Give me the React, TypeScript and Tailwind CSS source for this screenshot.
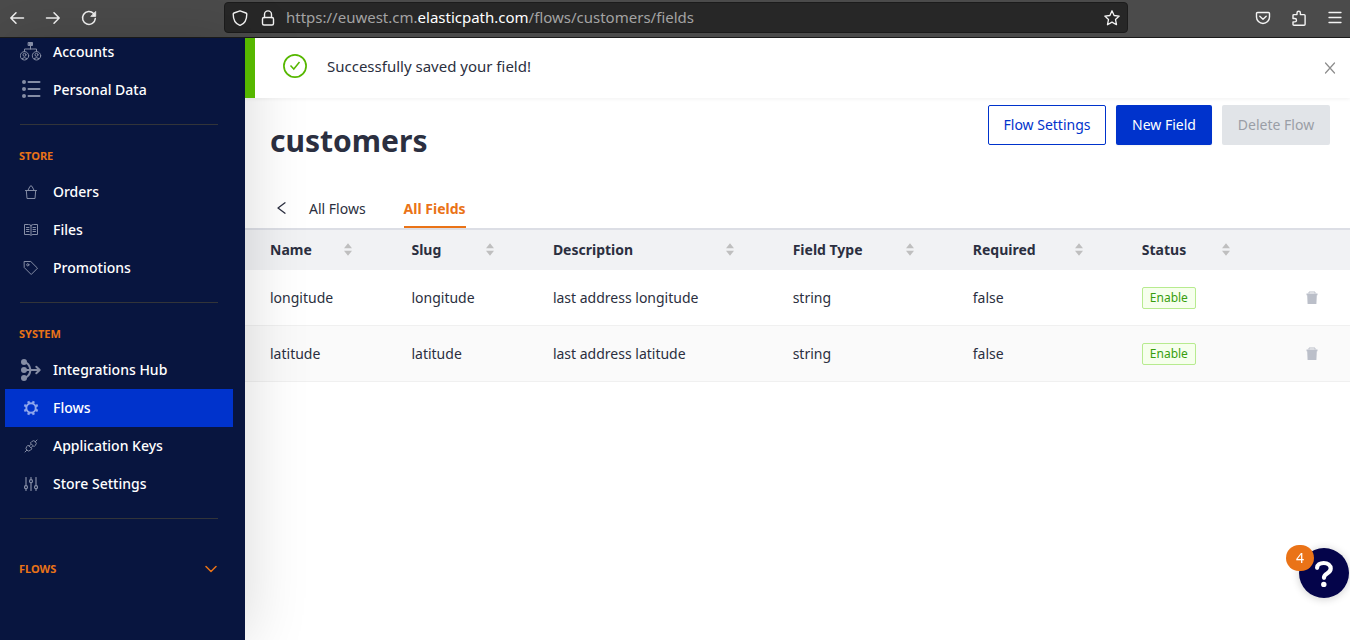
import type { ReactNode } from "react";

const stroke = {
  fill: "none",
  stroke: "currentColor",
  strokeLinecap: "round" as const,
  strokeLinejoin: "round" as const,
};

function BackIcon() {
  return (
    <svg width="16" height="16" viewBox="0 0 16 16" {...stroke} strokeWidth="1.5">
      <path d="M14.5 8H2M7 2.8 1.8 8 7 13.2" />
    </svg>
  );
}

function ForwardIcon() {
  return (
    <svg width="16" height="16" viewBox="0 0 16 16" {...stroke} strokeWidth="1.5">
      <path d="M1.5 8H14M9 2.8 14.2 8 9 13.2" />
    </svg>
  );
}

function ReloadIcon() {
  return (
    <svg width="16" height="16" viewBox="0 0 16 16" {...stroke} strokeWidth="1.5">
      <path d="M12.6 3.6A6.4 6.4 0 1 0 14.3 8.6" />
      <path d="M14.7 1.8v4.6h-4.6z" fill="currentColor" strokeWidth="0.8" />
    </svg>
  );
}

function ShieldIcon() {
  return (
    <svg width="16" height="16" viewBox="0 0 16 16" {...stroke} strokeWidth="1.4">
      <path d="M8 .8 14 3q.8.3.8 1C14.8 9.6 12.4 14 8 15.4 3.6 14 1.2 9.6 1.2 4q0-.7.8-1z" />
    </svg>
  );
}

function LockIcon() {
  return (
    <svg width="16" height="16" viewBox="0 0 16 16" {...stroke} strokeWidth="1.4">
      <path d="M4.5 7.500V4.400a3.500 3.500 0 0 1 7 0v3.100" />
      <rect x="2.500" y="7.500" width="11" height="7.500" rx="1.500" />
    </svg>
  );
}

function StarIcon() {
  return (
    <svg width="16" height="16" viewBox="0 0 16 16" {...stroke} strokeWidth="1.3">
      <path d="m8 .8 2.100 4.700 5.100.6-3.700 3.400 1 5.200L8 12.100l-4.500 2.600 1-5.200L.8 6.100l5.100-.6z" />
    </svg>
  );
}

function PocketIcon() {
  return (
    <svg width="16" height="16" viewBox="0 0 16 16" {...stroke} strokeWidth="1.4">
      <path d="M2.600 2.500h10.800q1.100 0 1.100 1.100V7a6.500 6.500 0 0 1-13 0V3.600q0-1.100 1.100-1.100z" />
      <path d="m4.800 6.200 3.200 3 3.200-3" />
    </svg>
  );
}

function PuzzleIcon() {
  return (
    <svg width="16" height="16" viewBox="0 0 16 16" {...stroke} strokeWidth="1.4">
      <path d="M6 4.600V2.900a1.700 1.700 0 0 1 3.400 0v1.700h3.700q1 0 1 1v8.600q0 1-1 1H3q-1 0-1-1v-2.300h1.800a1.700 1.700 0 0 0 0-3.400H2V5.600q0-1 1-1z" />
    </svg>
  );
}

function MenuIcon() {
  return (
    <svg width="16" height="16" viewBox="0 0 16 16" {...stroke} strokeWidth="1.3">
      <path d="M2 2.500h12M2 7.500h12M2 12.500h12" />
    </svg>
  );
}

function AccountsIcon() {
  return (
    <svg width="22" height="20" viewBox="0 0 22 20" {...stroke} strokeWidth="1">
      <rect x="8.500" y=".5" width="4" height="3" fill="currentColor" />
      <path d="M10.500 4v3M4.500 9.500V7h12v2.500" />
      <circle cx="4.500" cy="13.800" r="4.200" />
      <circle cx="16.500" cy="13.800" r="4.200" />
      <circle cx="4.500" cy="12.800" r="1.500" />
      <circle cx="16.500" cy="12.800" r="1.500" />
      <path d="M2 16.500q2.500-2 5 0M14 16.500q2.500-2 5 0" />
    </svg>
  );
}

function ListIcon() {
  return (
    <svg width="20" height="20" viewBox="0 0 20 20" {...stroke} strokeWidth="2">
      <path d="M7.500 2h11M7.500 9h11M7.500 16h11" />
      <g fill="currentColor" stroke="none">
        <circle cx="3" cy="2" r="2" />
        <circle cx="3" cy="9" r="2" />
        <circle cx="3" cy="16" r="2" />
      </g>
    </svg>
  );
}

function BagIcon() {
  return (
    <svg width="14" height="14" viewBox="0 0 14 14" {...stroke} strokeWidth="1">
      <path d="M1.500 5.500h11M2.300 5.500l.7 8h8l.7-8M4 5.200 6 1.300q1-1 2 0l2 3.900" />
    </svg>
  );
}

function BookIcon() {
  return (
    <svg width="16" height="14" viewBox="0 0 16 14" {...stroke} strokeWidth="1">
      <path d="M8 2.500Q7 1.500 5.500 1.500h-4v10h4.500Q7.500 11.500 8 12.500q.5-1 2-1h4.500v-10h-4Q9 1.500 8 2.500zV12M3.500 4.500h2.500M3.500 6.500h2.500M3.500 8.500h2.500M10 4.500h2.500M10 6.500h2.500M10 8.500h2.500" />
    </svg>
  );
}

function TagIcon() {
  return (
    <svg width="16" height="16" viewBox="0 0 16 16" {...stroke} strokeWidth="1">
      <path d="M1.500 1.500h6.300l6.700 6.700-6.300 6.300-6.700-6.700z" />
      <circle cx="4.800" cy="4.800" r="1.100" />
    </svg>
  );
}

function HubIcon() {
  return (
    <svg width="22" height="24" viewBox="0 0 22 24" {...stroke} strokeWidth="2">
      <path d="M4 4q5.500 1 6.500 8-1 7-6.500 8M4 12h15.500M16.300 8.800l3.400 3.200-3.400 3.200" />
      <g fill="currentColor" stroke="none">
        <circle cx="4" cy="4" r="3" />
        <circle cx="4" cy="12" r="3" />
        <circle cx="4" cy="20" r="3" />
      </g>
    </svg>
  );
}

const gearTeeth = [22.5, 67.5, 112.5, 157.5, 202.5, 247.5, 292.5, 337.5];

function GearIcon() {
  return (
    <svg width="16" height="16" viewBox="0 0 16 16" fill="none" stroke="currentColor">
      <circle cx="8" cy="8" r="4.700" strokeWidth="1.900" />
      {gearTeeth.map((angle) => (
        <path key={angle} d="M8 3V.7" strokeWidth="2.400" transform={`rotate(${angle} 8 8)`} />
      ))}
    </svg>
  );
}

function PlugIcon() {
  return (
    <svg width="14" height="14" viewBox="0 0 14 14" {...stroke} strokeWidth="1">
      <path d="M1 13l1.800-1.800M13 1l-1.800 1.800M2.800 11.200a2.600 2.600 0 0 1 0-3.700L4.200 6.100l3.700 3.700-1.400 1.400a2.600 2.600 0 0 1-3.700 0zM6.600 3.700l1.100-1.100a2.600 2.600 0 0 1 3.700 3.700l-1.100 1.100zM5.300 7l1.600-1.600M7 8.700l1.600-1.600" />
    </svg>
  );
}

function SlidersIcon() {
  return (
    <svg width="14" height="14" viewBox="0 0 14 14" {...stroke} strokeWidth="1.2">
      <path d="M2 .5v8M2 12v1.500M7 .5v2M7 6v7.500M12 .5v8M12 12v1.500" />
      <circle cx="2" cy="10.200" r="1.500" />
      <circle cx="7" cy="4.200" r="1.500" />
      <circle cx="12" cy="10.200" r="1.500" />
    </svg>
  );
}

function SuccessIcon() {
  return (
    <svg width="24" height="24" viewBox="0 0 24 24" fill="none" stroke="currentColor">
      <circle cx="12" cy="12" r="11.1" strokeWidth="1.7" />
      <path d="m7.500 11.500 3.300 3.500 5.700-7" strokeWidth="1.500" />
    </svg>
  );
}

function SortIcon() {
  return (
    <svg width="8" height="14" viewBox="0 0 8 14" fill="#bfbfbf">
      <path d="M4 .3 8 5.200H0zM4 12.700 8 7.800H0z" />
    </svg>
  );
}

function TrashIcon() {
  return (
    <svg width="12" height="14" viewBox="0 0 12 14" fill="currentColor">
      <path d="M.5 2.500h11v1.700h-.7l-.4 8.800H1.600l-.4-8.800H.5z" />
      <path d="M3 2.500V1h6v1.500" fill="none" stroke="currentColor" strokeWidth="1" />
    </svg>
  );
}

function Browser() {
  return (
    <header className="flex h-[38px] items-start border-b border-[#1c1c1c] bg-[#4b4b4b] pt-0.5 text-[#f4f4f4]">
      <div className="flex h-[31px] w-[224px] items-center gap-5 pl-[9px]">
        <button aria-label="Back"><BackIcon /></button>
        <button aria-label="Forward"><ForwardIcon /></button>
        <button aria-label="Reload"><ReloadIcon /></button>
      </div>
      <div className="flex h-[31px] flex-1 items-center rounded-sm border border-[#1c1c1c] bg-[#272727] px-[7px]">
        <div className="flex gap-3">
          <ShieldIcon />
          <LockIcon />
        </div>
        <p className="ml-[10px] flex-1 pb-0.5 text-[15px] leading-5 text-[#a3a3a3]">
          https://euwest.cm.<span className="text-white">elasticpath.com</span>/flows/customers/fields
        </p>
        <button aria-label="Bookmark this page"><StarIcon /></button>
      </div>
      <div className="flex h-[31px] w-[222px] items-center justify-end gap-5 pr-[7px]">
        <button aria-label="Save to Pocket"><PocketIcon /></button>
        <button aria-label="Extensions"><PuzzleIcon /></button>
        <button aria-label="Menu"><MenuIcon /></button>
      </div>
    </header>
  );
}

function NavItem({ icon, label, active = false }: { icon: ReactNode; label: string; active?: boolean }) {
  return (
    <a
      href="#"
      aria-current={active ? "page" : undefined}
      className={
        active
          ? "mr-3 ml-[5px] flex h-[38px] items-center bg-[#0033cc] pl-[14px] text-sm font-medium text-white"
          : "mr-3 ml-[5px] flex h-[38px] items-center pl-[14px] text-sm font-medium text-white"
      }
    >
      <span className={active ? "flex w-6 justify-center text-[#8ea6ec]" : "flex w-6 justify-center text-[#858da5]"}>
        {icon}
      </span>
      <span className="ml-[10px]">{label}</span>
    </a>
  );
}

function Divider() {
  return <hr className="mt-[15px] mr-[27px] ml-5 border-[#323439]" />;
}

function SectionTitle({ children }: { children: ReactNode }) {
  return <h2 className="pt-[23px] pb-[9px] pl-[19px] text-[11px] leading-4 font-bold text-[#ea7317]">{children}</h2>;
}

function Sidebar() {
  return (
    <aside className="z-10 w-[245px] shrink-0 overflow-hidden bg-[#08153f] shadow-[0_0_60px_rgba(0,0,0,0.16)]">
      <nav className="-mt-[5px]">
        <NavItem icon={<AccountsIcon />} label="Accounts" />
        <NavItem icon={<ListIcon />} label="Personal Data" />
        <Divider />
        <SectionTitle>STORE</SectionTitle>
        <NavItem icon={<BagIcon />} label="Orders" />
        <NavItem icon={<BookIcon />} label="Files" />
        <NavItem icon={<TagIcon />} label="Promotions" />
        <Divider />
        <SectionTitle>SYSTEM</SectionTitle>
        <NavItem icon={<HubIcon />} label="Integrations Hub" />
        <NavItem icon={<GearIcon />} label="Flows" active />
        <NavItem icon={<PlugIcon />} label="Application Keys" />
        <NavItem icon={<SlidersIcon />} label="Store Settings" />
        <Divider />
        <button className="mt-[42px] flex w-full items-center justify-between pr-7 pl-[19px] text-[11px] leading-4 font-bold text-[#ea7317]">
          FLOWS
          <svg width="12" height="8" viewBox="0 0 12 8" {...stroke} strokeWidth="1.5">
            <path d="m1 1.500 5 5 5-5" />
          </svg>
        </button>
      </nav>
    </aside>
  );
}

const columns = [
  { label: "Name", width: "w-[12.8%]" },
  { label: "Slug", width: "w-[12.8%]" },
  { label: "Description", width: "w-[21.7%]" },
  { label: "Field Type", width: "w-[16.3%]" },
  { label: "Required", width: "w-[15.3%]" },
  { label: "Status", width: "w-[13.3%]" },
];

const fields = [
  { name: "longitude", description: "last address longitude", type: "string", required: "false" },
  { name: "latitude", description: "last address latitude", type: "string", required: "false" },
];

function FieldsTable() {
  return (
    <table className="w-full table-fixed border-separate border-spacing-0 text-left text-sm">
      <thead className="bg-[#f1f2f4]">
        <tr className="h-10">
          {columns.map((column) => (
            <th key={column.label} className={`${column.width} pl-[25px] font-bold`}>
              <button className="flex w-full items-center justify-between pr-[34px]">
                {column.label}
                <SortIcon />
              </button>
            </th>
          ))}
          <th aria-label="Actions" />
        </tr>
      </thead>
      <tbody className="*:*:border-b *:*:border-[#f0f0f0]">
        {fields.map((field) => (
          <tr key={field.name} className="h-14 even:bg-[#fafafa]">
            <td className="pl-[25px]">{field.name}</td>
            <td className="pl-[25px]">{field.name}</td>
            <td className="pl-[25px]">{field.description}</td>
            <td className="pl-[25px]">{field.type}</td>
            <td className="pl-[25px]">{field.required}</td>
            <td className="pl-[25px]">
              <span className="inline-block rounded-xs border border-[#b7eb8f] bg-[#f6ffed] px-[7px] text-xs leading-5 text-[#389e0d]">
                Enable
              </span>
            </td>
            <td className="pr-8 text-right">
              <button aria-label={`Delete ${field.name}`} className="block ml-auto text-[#bbbfc9]">
                <TrashIcon />
              </button>
            </td>
          </tr>
        ))}
      </tbody>
    </table>
  );
}

function Help() {
  return (
    <button
      aria-label="Help, 4 notifications"
      className="fixed right-px bottom-[42px] z-30 size-[50px] rounded-full bg-[#04044a] text-white shadow-[0_1px_8px_rgba(0,0,0,0.2)]"
    >
      <svg width="50" height="50" viewBox="0 0 50 50" {...stroke} strokeWidth="4.2">
        <path d="M18.100 19.800C18.100 16.800 21 15 24.700 15c4.200 0 7 2.300 7 5.600 0 5.200-6.700 4.700-6.700 9v.2" />
        <circle cx="24.800" cy="36.400" r="2.700" fill="currentColor" stroke="none" />
      </svg>
      <span className="absolute -top-[3px] -left-[13px] flex h-[26px] w-7 items-center justify-center rounded-full bg-[#ea7317] text-sm">
        4
      </span>
    </button>
  );
}

export default function App() {
  return (
    <div className="flex min-h-screen flex-col bg-white font-['Noto_Sans','Open_Sans',sans-serif] text-[#2b2f40]">
      <Browser />
      <div className="flex flex-1">
        <Sidebar />
        <main className="min-w-0 flex-1">
          <div
            role="status"
            className="relative z-20 flex h-[60px] items-center border-l-[10px] border-[#56b700] bg-white pr-[14px] pl-7 shadow-[0_1px_4px_rgba(0,0,0,0.06)]"
          >
            <span className="pb-1 text-[#56b700]"><SuccessIcon /></span>
            <p className="ml-5 flex-1 pb-1 text-[15px] leading-6">Successfully saved your field!</p>
            <button aria-label="Close" className="text-[#8c8c8c]">
              <svg width="12" height="12" viewBox="0 0 12 12" {...stroke} strokeWidth="1.2">
                <path d="m1.500 1 9 10M10.500 1l-9 10" />
              </svg>
            </button>
          </div>
          <div className="flex items-start justify-between pt-[7px] pr-5 pl-[25px]">
            <h1 className="pt-4 text-[30px] leading-10 font-bold">customers</h1>
            <div className="flex gap-[10px] text-sm">
              <button className="h-10 w-[118px] rounded-xs border border-[#0033cc] bg-white text-[#0033cc]">
                Flow Settings
              </button>
              <button className="h-10 w-24 rounded-xs bg-[#0033cc] text-white shadow-xs">New Field</button>
              <button disabled className="h-10 w-[108px] rounded-xs bg-[#e1e4e8] text-[#9a9ea6]">
                Delete Flow
              </button>
            </div>
          </div>
          <div className="mt-[29px] flex h-10 items-stretch border-b-2 border-[#dcdee5] pl-8 text-sm">
            <button aria-label="Back to flows" className="pb-[2px]">
              <svg width="9" height="12" viewBox="0 0 9 12" {...stroke} strokeWidth="1.3">
                <path d="M8 .8 1 6l7 5.200" />
              </svg>
            </button>
            <a href="#" className="ml-[23px] flex items-center">All Flows</a>
            <a href="#" className="ml-[38px] flex items-center border-b-2 border-[#ea7317] pt-0.5 font-bold text-[#ea7317]">
              All Fields
            </a>
          </div>
          <FieldsTable />
        </main>
      </div>
      <Help />
    </div>
  );
}
